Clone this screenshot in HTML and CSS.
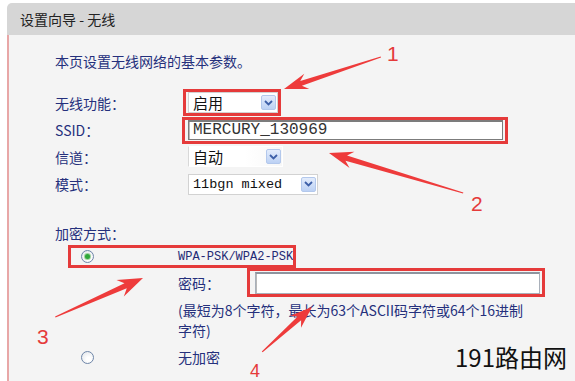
FILE: index.html
```html
<!DOCTYPE html>
<html>
<head>
<meta charset="utf-8">
<link rel="stylesheet" href="styles.css">
</head>
<body>
<div class="page">
  <div class="header">设置向导 - 无线</div>
  <div class="content">
    <p class="intro">本页设置无线网络的基本参数。</p>
    <div class="form">
      <div class="row">
        <span class="label">无线功能：</span>
        <span class="mark mark-enable">
          <span class="select s-enable"><span class="val">启用</span><span class="arrow"><svg width="9" height="6" viewBox="0 0 9 6"><polyline points="1,1 4.5,4.5 8,1" fill="none" stroke="#3d5fa8" stroke-width="1.8"/></svg></span></span>
        </span>
      </div>
      <div class="row">
        <span class="label">SSID：</span>
        <span class="mark mark-ssid">
          <span class="input ssid">MERCURY_130969</span>
        </span>
      </div>
      <div class="row">
        <span class="label">信道：</span>
        <span class="select s-channel plain"><span class="val">自动</span><span class="arrow"><svg width="9" height="6" viewBox="0 0 9 6"><polyline points="1,1 4.5,4.5 8,1" fill="none" stroke="#3d5fa8" stroke-width="1.8"/></svg></span></span>
      </div>
      <div class="row row-last">
        <span class="label">模式：</span>
        <span class="select s-mode"><span class="val mono">11bgn mixed</span><span class="arrow"><svg width="9" height="6" viewBox="0 0 9 6"><polyline points="1,1 4.5,4.5 8,1" fill="none" stroke="#3d5fa8" stroke-width="1.8"/></svg></span></span>
      </div>
    </div>

    <div class="enc-label">加密方式：</div>
    <div class="wpa-row mark mark-wpa">
      <span class="radio checked"><span class="dot"></span></span>
      <span class="wpa-text">WPA-PSK/WPA2-PSK</span>
    </div>
    <div class="pwd-row">
      <span class="pwd-label">密码：</span>
      <span class="mark mark-pwd"><span class="input pwd"></span></span>
    </div>
    <p class="hint">(最短为8个字符，最长为63个ASCII码字符或64个16进制字符)</p>
    <div class="none-row">
      <span class="radio"></span>
      <span class="none-text">无加密</span>
    </div>
  </div>

  <svg class="notes" width="575" height="381" viewBox="0 0 575 381">
    <g fill="#ee3b3b">
      <polygon transform="translate(284,89) rotate(-18.3)" points="0,0 24,-8 18,-2.6 102,-0.6 102,0.6 18,2.6 24,8"/>
      <polygon transform="translate(329,153) rotate(16.6)" points="0,0 24,-8.5 18,-2.8 140,-0.6 140,0.6 18,2.8 24,8.5"/>
      <polygon transform="translate(143,278) rotate(156)" points="0,0 25,-9 19,-2.8 96,-0.6 96,0.6 19,2.8 25,9"/>
      <polygon transform="translate(312,307) rotate(138)" points="0,0 22,-8 17,-2.6 67,-0.6 67,0.6 17,2.6 22,8"/>
    </g>
    <g class="num" fill="#e53a3a">
      <text x="387" y="61">1</text>
      <text x="471" y="211">2</text>
      <text x="37" y="344">3</text>
      <text class="n4" x="250" y="377">4</text>
    </g>
  </svg>
  <span class="watermark">191路由网</span>
</div>
</body>
</html>
```

FILE: styles.css
```css
* { box-sizing: border-box; }

body {
  margin: 0;
  background: #fff;
  font-family: "Noto Sans CJK SC", "Noto Sans", sans-serif;
}

.page {
  position: relative;
  width: 575px;
  height: 381px;
  overflow: hidden;
  padding: 3px 0 0 7px;
}

.header {
  height: 32px;
  background: #d6d6d6;
  border-radius: 5px 0 0 0;
  padding-left: 13px;
  font-size: 14px;
  line-height: 32px;
  color: #222;
}

.content {
  height: 346px;
  background: #f4f4f4;
  border-left: 2px solid #e8a7a7;
  padding: 16px 0 0 46px;
  color: #25307c;
  font-size: 14px;
}

.intro {
  margin: 0;
  line-height: 20px;
}

.form { margin-top: 18px; }

.row {
  display: flex;
  align-items: center;
  height: 27px;
}
.row-last { height: 28px; }

.label { width: 133px; line-height: 20px; }

.mark { position: relative; display: inline-flex; }
.mark::after {
  content: "";
  position: absolute;
  border: 3px solid #e53a3a;
  pointer-events: none;
}
.mark-enable::after { top: -3px; bottom: -3px; left: -5px; right: -3px; }
.mark-ssid::after { top: -3px; bottom: -4px; left: -6px; right: -5px; }
.mark-wpa::after { top: -3px; bottom: -3px; left: -3px; right: -3px; }
.mark-pwd::after { top: -4px; bottom: -3px; left: -8px; right: -5px; }

.select {
  display: inline-flex;
  align-items: center;
  justify-content: space-between;
  height: 21px;
  background: #fff;
  border: 1px solid #d2d2d2;
  padding: 0 1px 0 4px;
  font-size: 15px;
  line-height: 19px;
  color: #111;
}
.select.plain { border-color: #fff #fff #fff #d8d8d8; background: linear-gradient(90deg, #fff 60%, #f7f7f7); }
.s-enable { width: 90px; }
.s-channel { width: 95px; }
.s-mode { width: 130px; }

.mono {
  font-family: "Liberation Mono", monospace;
  font-size: 13.5px;
}

.arrow {
  display: inline-flex;
  align-items: center;
  justify-content: center;
  width: 15px;
  height: 15px;
  border: 1px solid #b3c8ec;
  border-radius: 2px;
  background: linear-gradient(#e3ecfc, #bcd1f4);
}

.input {
  display: inline-flex;
  align-items: center;
  background: #fff;
  border: 1px solid #7c7c7c;
  border-top-width: 2px;
  box-shadow: inset 1px 0 0 #b8b8b8;
}
.ssid {
  width: 315px;
  height: 20px;
  padding-left: 4px;
  font-family: "Liberation Mono", monospace;
  font-size: 16px;
  color: #333;
}

.enc-label {
  margin-top: 25px;
  line-height: 20px;
}

.wpa-row {
  margin: 5px 0 0 16px;
  height: 17px;
  align-items: center;
  padding-left: 10px;
}
.wpa-text {
  margin-left: 84px;
  font-family: "Liberation Mono", monospace;
  font-size: 12px;
  color: #1f2a74;
}

.radio {
  display: inline-flex;
  align-items: center;
  justify-content: center;
  width: 13px;
  height: 13px;
  border-radius: 50%;
  border: 1px solid #6f86a8;
  background: radial-gradient(circle at 60% 65%, #ffffff 20%, #dfe3e8 100%);
}
.radio .dot {
  width: 5px;
  height: 5px;
  border-radius: 50%;
  background: #2fa83a;
  box-shadow: 0 0 0 1px #9fd49f;
}

.pwd-row {
  display: flex;
  align-items: center;
  height: 24px;
  margin: 6px 0 0 123px;
}
.pwd-label { width: 77px; line-height: 20px; }
.pwd {
  width: 285px;
  height: 22px;
  border: 1px solid #a9b0ba;
  border-top: 2px solid #8d949e;
}

.hint {
  margin: 5px 0 0 123px;
  width: 352px;
  line-height: 20px;
}

.none-row {
  display: flex;
  align-items: center;
  height: 20px;
  margin: 7px 0 0 26px;
}
.none-text { margin-left: 84px; line-height: 20px; }

.notes {
  position: absolute;
  left: 0;
  top: 0;
  pointer-events: none;
}
.num text {
  font-family: "Liberation Sans", sans-serif;
  font-size: 21px;
}
.num .n4 { font-size: 18px; }

.watermark {
  position: absolute;
  left: 455px;
  top: 340px;
  font-family: "Noto Sans CJK SC", sans-serif;
  font-size: 24px;
  line-height: 34px;
  color: #111;
}
```
